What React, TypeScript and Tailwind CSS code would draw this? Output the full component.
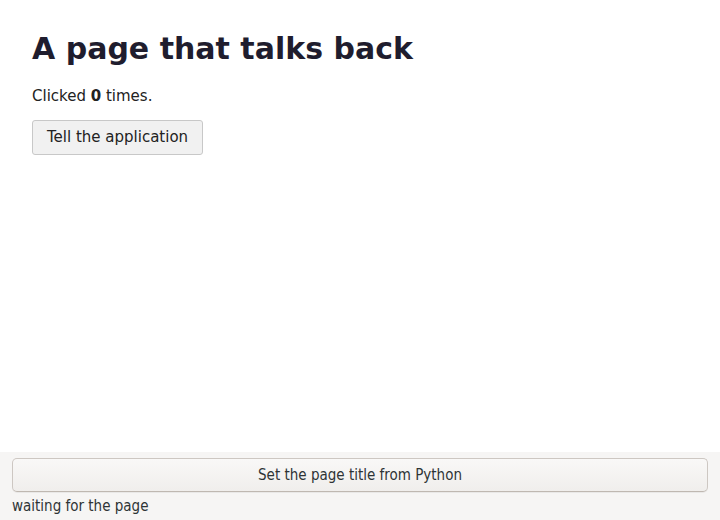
export default function App() {
  return (
    <div className="flex h-[520px] w-[720px] flex-col bg-white font-['DejaVu_Sans',sans-serif]">
      <div className="flex-1 px-8 pt-[31px]">
        <h1 className="text-[30px] font-bold leading-[36px] text-[#1f1d2e]">A page that talks back</h1>
        <p className="mt-[19px] text-[15px] leading-[20px] text-[#222]">
          Clicked <b>0</b> times.
        </p>
        <button className="mt-[14px] h-[35px] rounded-[3px] border border-[#c8c8c8] bg-[#f1f1f1] px-[14px] text-[15px] text-[#222]">
          Tell the application
        </button>
      </div>
      <div className="flex h-[68px] flex-col bg-[#f6f5f4] px-3 pt-[6px] font-['DejaVu_Sans_Condensed','DejaVu_Sans',sans-serif]">
        <button className="h-[34px] w-full rounded-[5px] border border-[#cdc7c2] border-b-[#bfb8b1] bg-gradient-to-b from-[#f9f8f7] to-[#f0eeec] text-[15px] text-[#2e3436] shadow-[0_1px_0_rgba(0,0,0,0.05)]">
          Set the page title from Python
        </button>
        <div className="mt-[4px] text-[15px] leading-[20px] text-[#2e3436]">waiting for the page</div>
      </div>
    </div>
  );
}
